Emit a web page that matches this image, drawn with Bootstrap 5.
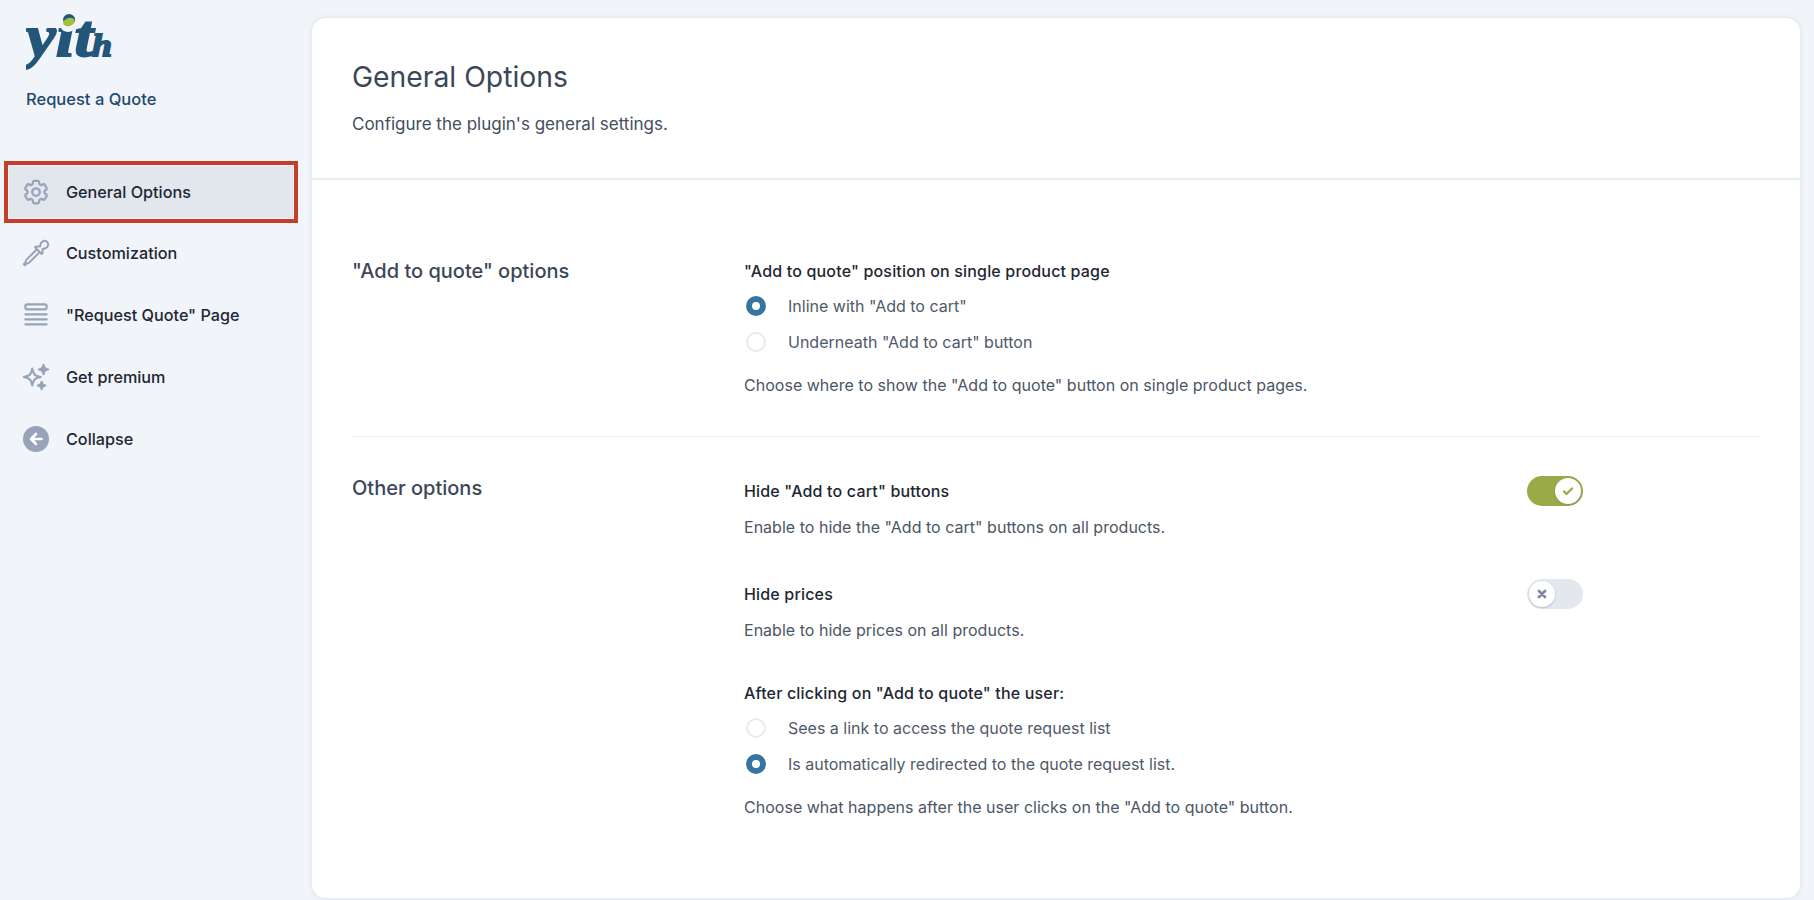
<!doctype html>
<html lang="en">
<head>
<meta charset="utf-8">
<title>General Options</title>
<link href="https://cdn.jsdelivr.net/npm/bootstrap@5.3.0/dist/css/bootstrap.min.css" rel="stylesheet">
<style>
html,body{height:100%;}
body{background:#f1f4f9;font-family:Inter,"Liberation Sans",sans-serif;font-size:16px;color:#434e5e;overflow:hidden;}
.shell{height:900px;}
.side{width:312px;flex:none;}
.brand{padding-left:26px;height:161px;}
.brand svg{display:block;}
.brand-name{color:#1f4a6c;font-size:16.5px;font-weight:500;margin-top:13px;line-height:20px;}
.menu-row{height:62px;margin:0 19px 0 9px;padding-left:12px;gap:15px;color:#1e2733;font-size:16.2px;font-weight:450;text-decoration:none;}
.menu-row svg{width:30px;height:30px;flex:none;color:#97a3b8;}
.menu-current{height:52px;margin-top:5px;margin-bottom:4px;background:#e2e7ee;box-shadow:0 0 0 1px #f4f1ee,0 0 0 5px #c2402a;}
.sheet{width:1488px;height:880px;margin-top:18px;background:#fff;border-radius:14px;box-shadow:0 0 4px rgba(150,165,185,.25);}
.sheet-head{height:162px;padding:41px 40px 0;border-bottom:2px solid #e9ecf0;}
.sheet-title{font-size:28.3px;font-weight:400;color:#3b4758;line-height:36px;margin:0;}
.sheet-sub{font-size:17px;margin:19px 0 0;line-height:20px;}
.sheet-body{padding:0 40px;}
.block{width:100%;}
.block-one{padding-top:81px;height:257px;border-bottom:1px solid #e9ecf0;}
.block-two{padding-top:39px;}
.block-title{width:392px;flex:none;font-size:20px;font-weight:500;color:#3b4758;line-height:20px;margin:0;}
.block-title-low{margin-top:2px;}
.block-fields{width:839px;}
.fld-label{font-size:16px;font-weight:450;color:#1e2733;line-height:20px;letter-spacing:.17px;}
.fld-note{font-size:16px;line-height:20px;color:#4b5666;letter-spacing:.02px;}
.note-near{margin-top:11px;}
.note-far{margin-top:15px;}
.opt-list{margin-top:7px;}
.opt-row{height:36px;gap:22px;padding-left:2px;font-size:16px;color:#4f5a6a;}
.opt-dot{width:20px;height:20px;border-radius:50%;border:2px solid #e8eaee;background:#fff;flex:none;}
.opt-dot-on{border:6px solid #35769f;}
.flip{width:56px;height:30px;border-radius:15px;padding:2px;flex:none;}
.flip-on{background:#9aaa46;justify-content:flex-end;}
.flip-off{background:#e3e8ef;justify-content:flex-start;}
.flip-knob{width:26px;height:26px;border-radius:50%;background:#fff;box-shadow:0 1px 2px rgba(90,105,130,.35);}
.flip-knob svg{width:14px;height:14px;}
.row-second{margin-top:42px;}
.label-third{margin-top:43px;}
</style>
</head>
<body>
<div class="shell d-flex">
  <aside class="side">
    <div class="brand">
      <svg width="100" height="76" viewBox="0 0 100 76" role="img" aria-label="yith">
        <text transform="translate(0 56) scale(1.12 1)" font-family="'Liberation Serif',serif" font-weight="700" font-style="italic" font-size="60" fill="#24567a" stroke="#24567a" stroke-width="1.800">yit<tspan font-size="32" dx="-1">h</tspan></text>
        <ellipse cx="42" cy="27" rx="7" ry="5" fill="#f1f4f9"/>
        <ellipse cx="43" cy="22" rx="6" ry="4" fill="#a0c13c" transform="rotate(-20 43 22)"/>
      </svg>
      <div class="brand-name">Request a Quote</div>
    </div>
    <nav class="d-flex flex-column">
      <a href="#" class="menu-row menu-current d-flex align-items-center">
        <svg viewBox="0 0 24 24" fill="none" stroke="currentColor" stroke-width="1.800" stroke-linecap="round" stroke-linejoin="round"><path d="M9.594 3.94c.09-.542.56-.94 1.11-.94h2.593c.55 0 1.02.398 1.11.94l.213 1.281c.063.374.313.686.645.87.074.04.147.083.22.127.324.196.72.257 1.075.124l1.217-.456a1.125 1.125 0 011.37.49l1.296 2.247a1.125 1.125 0 01-.26 1.431l-1.003.827c-.293.24-.438.613-.431.992a6.759 6.759 0 010 .255c-.007.378.138.75.43.99l1.005.828c.424.35.534.954.26 1.43l-1.298 2.247a1.125 1.125 0 01-1.369.491l-1.217-.456c-.355-.133-.75-.072-1.076.124a6.57 6.57 0 01-.22.128c-.331.183-.581.495-.644.869l-.213 1.28c-.09.543-.56.941-1.11.941h-2.594c-.55 0-1.02-.398-1.11-.94l-.213-1.281c-.062-.374-.312-.686-.644-.87a6.52 6.52 0 01-.22-.127c-.325-.196-.72-.257-1.076-.124l-1.217.456a1.125 1.125 0 01-1.369-.49l-1.297-2.247a1.125 1.125 0 01.26-1.431l1.004-.827c.292-.24.437-.613.43-.992a6.932 6.932 0 010-.255c.007-.378-.138-.75-.43-.99l-1.004-.828a1.125 1.125 0 01-.26-1.43l1.297-2.247a1.125 1.125 0 011.37-.491l1.216.456c.356.133.751.072 1.076-.124.072-.044.146-.087.22-.128.332-.183.582-.495.644-.869l.214-1.281z"/><path d="M15 12a3 3 0 11-6 0 3 3 0 016 0z"/></svg>
        General Options
      </a>
      <a href="#" class="menu-row d-flex align-items-center">
        <svg viewBox="0 0 24 24" fill="none" stroke="currentColor" stroke-width="1.600" stroke-linecap="round" stroke-linejoin="round"><path d="M15 11.25l1.5 1.5.75-.75V8.758l2.276-.61a3 3 0 10-3.675-3.675l-.61 2.277H12l-.75.75 1.5 1.5M15 11.25l-8.47 8.47c-.34.34-.8.53-1.28.53s-.94.19-1.28.53l-.97.97-.75-.75.97-.97c.34-.34.53-.8.53-1.28s.19-.94.53-1.28L12.75 9M15 11.25L12.75 9"/></svg>
        Customization
      </a>
      <a href="#" class="menu-row d-flex align-items-center">
        <svg viewBox="0 0 24 24" fill="none" stroke="currentColor" stroke-width="1.700" stroke-linecap="round" stroke-linejoin="round"><rect x="3.500" y="3.500" width="17" height="4" rx="1.500"/><path d="M3.500 11.500h17M3.500 15.500h17M3.500 19.500h17"/></svg>
        "Request Quote" Page
      </a>
      <a href="#" class="menu-row d-flex align-items-center">
        <svg viewBox="0 0 24 24" fill="none" stroke="currentColor" stroke-width="1.600" stroke-linecap="round" stroke-linejoin="round"><path d="M9.813 15.904L9 18.75l-.813-2.846a4.5 4.5 0 00-3.09-3.09L2.250 12l2.846-.813a4.500 4.500 0 003.090-3.090L9 5.250l.813 2.846a4.500 4.500 0 003.090 3.090L15.750 12l-2.846.813a4.500 4.500 0 00-3.090 3.090z"/><path fill="currentColor" d="M18.259 8.715L18 9.750l-.259-1.035a3.375 3.375 0 00-2.455-2.456L14.250 6l1.036-.259a3.375 3.375 0 002.455-2.456L18 2.250l.259 1.035a3.375 3.375 0 002.456 2.456L21.750 6l-1.035.259a3.375 3.375 0 00-2.456 2.456zM16.894 20.567L16.500 21.750l-.394-1.183a2.250 2.250 0 00-1.423-1.423L13.500 18.750l1.183-.394a2.250 2.250 0 001.423-1.423l.394-1.183.394 1.183a2.250 2.250 0 001.423 1.423l1.183.394-1.183.394a2.250 2.250 0 00-1.423 1.423z"/></svg>
        Get premium
      </a>
      <a href="#" class="menu-row d-flex align-items-center">
        <svg viewBox="0 0 30 30"><circle cx="15" cy="15" r="13" fill="currentColor"/><path d="M20.500 15h-10M15 10l-5 5 5 5" fill="none" stroke="#fff" stroke-width="2.600" stroke-linecap="round" stroke-linejoin="round"/></svg>
        Collapse
      </a>
    </nav>
  </aside>
  <main class="sheet">
    <header class="sheet-head">
      <h1 class="sheet-title">General Options</h1>
      <p class="sheet-sub">Configure the plugin's general settings.</p>
    </header>
    <div class="sheet-body">
      <section class="block block-one d-flex">
        <h2 class="block-title">"Add to quote" options</h2>
        <div class="block-fields">
          <div class="fld-label">"Add to quote" position on single product page</div>
          <div class="opt-list d-flex flex-column">
            <div class="opt-row d-flex align-items-center"><span class="opt-dot opt-dot-on"></span>Inline with "Add to cart"</div>
            <div class="opt-row d-flex align-items-center"><span class="opt-dot"></span>Underneath "Add to cart" button</div>
          </div>
          <div class="fld-note note-far">Choose where to show the "Add to quote" button on single product pages.</div>
        </div>
      </section>
      <section class="block block-two d-flex">
        <h2 class="block-title block-title-low">Other options</h2>
        <div class="block-fields">
          <div class="d-flex justify-content-between align-items-center">
            <div class="fld-label">Hide "Add to cart" buttons</div>
            <div class="flip flip-on d-flex"><span class="flip-knob d-flex align-items-center justify-content-center"><svg viewBox="0 0 14 14" fill="none" stroke="#9aaa46" stroke-width="2.400" stroke-linecap="round" stroke-linejoin="round"><path d="M3 7.500l2.500 2.500 5.500-5.500"/></svg></span></div>
          </div>
          <div class="fld-note note-near">Enable to hide the "Add to cart" buttons on all products.</div>
          <div class="row-second d-flex justify-content-between align-items-center">
            <div class="fld-label">Hide prices</div>
            <div class="flip flip-off d-flex"><span class="flip-knob d-flex align-items-center justify-content-center"><svg viewBox="0 0 14 14" fill="none" stroke="#7c89a3" stroke-width="2.800" stroke-linecap="round"><path d="M4 4l6 6M10 4l-6 6"/></svg></span></div>
          </div>
          <div class="fld-note note-near">Enable to hide prices on all products.</div>
          <div class="fld-label label-third">After clicking on "Add to quote" the user:</div>
          <div class="opt-list d-flex flex-column">
            <div class="opt-row d-flex align-items-center"><span class="opt-dot"></span>Sees a link to access the quote request list</div>
            <div class="opt-row d-flex align-items-center"><span class="opt-dot opt-dot-on"></span>Is automatically redirected to the quote request list.</div>
          </div>
          <div class="fld-note note-far">Choose what happens after the user clicks on the "Add to quote" button.</div>
        </div>
      </section>
    </div>
  </main>
</div>
<script src="https://cdn.jsdelivr.net/npm/bootstrap@5.3.0/dist/js/bootstrap.bundle.min.js"></script>
</body>
</html>
